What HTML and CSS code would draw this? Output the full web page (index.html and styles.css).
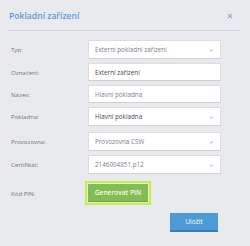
FILE: index.html
```html
<!DOCTYPE html>
<html lang="cs">
<head>
<meta charset="utf-8">
<link rel="stylesheet" href="styles.css">
</head>
<body>
<div class="dialog">
  <div class="header">
    <span class="title">Pokladní zařízení</span>
    <span class="close">×</span>
  </div>
  <div class="form">
    <div class="row sel"><label>Typ:</label><div class="ctl select light">Externí pokladní zařízení<svg class="chev" viewBox="0 0 6 4"><path d="M1 1 L3 3 L5 1" fill="none" stroke="#5b9bd5" stroke-width="1"/></svg></div></div>
    <div class="row"><label>Označení:</label><div class="ctl">Externí zařízení</div></div>
    <div class="row"><label>Název:</label><div class="ctl light">Hlavní pokladna</div></div>
    <div class="row sel"><label>Pokladna:</label><div class="ctl select">Hlavní pokladna<svg class="chev" viewBox="0 0 6 4"><path d="M1 1 L3 3 L5 1" fill="none" stroke="#5b9bd5" stroke-width="1"/></svg></div></div>
    <div class="row sel gap"><label>Provozovna:</label><div class="ctl select light">Provozovna CSW<svg class="chev" viewBox="0 0 6 4"><path d="M1 1 L3 3 L5 1" fill="none" stroke="#5b9bd5" stroke-width="1"/></svg></div></div>
    <div class="row sel"><label>Certifikát:</label><div class="ctl select light">2146004851.p12<svg class="chev" viewBox="0 0 6 4"><path d="M1 1 L3 3 L5 1" fill="none" stroke="#5b9bd5" stroke-width="1"/></svg></div></div>
    <div class="row pin"><label>Kód PIN:</label><div><button class="btn green">Generovat PIN</button></div></div>
  </div>
  <div class="footer"><button class="btn blue">Uložit</button></div>
</div>
</body>
</html>
```
FILE: styles.css
```css
html, body { margin: 0; padding: 0; }
body {
  background: #e9eaee;
  font-family: "Open Sans", "Noto Sans", sans-serif;
  width: 250px;
  height: 246px;
  overflow: hidden;
}
.dialog { padding: 0 9px 0 8px; }
.header {
  height: 30px;
  display: flex;
  align-items: center;
  justify-content: space-between;
  border-bottom: 1px solid #d3d4d9;
  padding: 0 8px 0 1px;
}
.title {
  color: #5d9cd6;
  font-size: 8.6px;
  font-weight: 600;
  padding-top: 1px;
}
.close {
  color: #6aa2d8;
  font-size: 11px;
  line-height: 1;
}
.form {
  display: flex;
  flex-direction: column;
  gap: 4px;
  padding: 9px 0 0 3px;
}
.row {
  display: grid;
  grid-template-columns: 77px 133px;
  align-items: center;
}
.row.gap { margin-top: 2px; }
.row label {
  font-size: 6.1px;
  color: #75767a;
}
.ctl {
  height: 18px;
  box-sizing: border-box;
  background: #fff;
  border: 1px solid #dcdde1;
  border-bottom-color: #cfd0d4;
  font-size: 6.3px;
  color: #4a4b4f;
  display: flex;
  align-items: center;
  padding: 0 6px;
  position: relative;
}
.ctl.light { color: #808186; }
.sel .ctl { height: 19px; }
.chev {
  position: absolute;
  right: 6px;
  top: 8px;
  width: 5px;
  height: 3px;
}
.pin { margin-top: 6px; }
.btn {
  border: none;
  font-family: inherit;
  color: #fff;
  font-weight: 600;
  font-size: 6.6px;
  padding: 0;
  display: flex;
  align-items: center;
  justify-content: center;
}
.green {
  width: 60px;
  height: 18px;
  background: #85bd55;
  border-bottom: 1px solid #6c9f41;
  outline: 2px solid #c5ef45;
  outline-offset: 1px;
  box-sizing: border-box;
  color: #f2f8ea;
}
.footer {
  display: flex;
  justify-content: flex-end;
  padding: 11px 23px 0 0;
}
.blue {
  width: 48px;
  height: 19px;
  background: #4c9ad6;
  border-bottom: 2px solid #3b7db6;
  box-sizing: border-box;
  font-weight: 400;
}
```
